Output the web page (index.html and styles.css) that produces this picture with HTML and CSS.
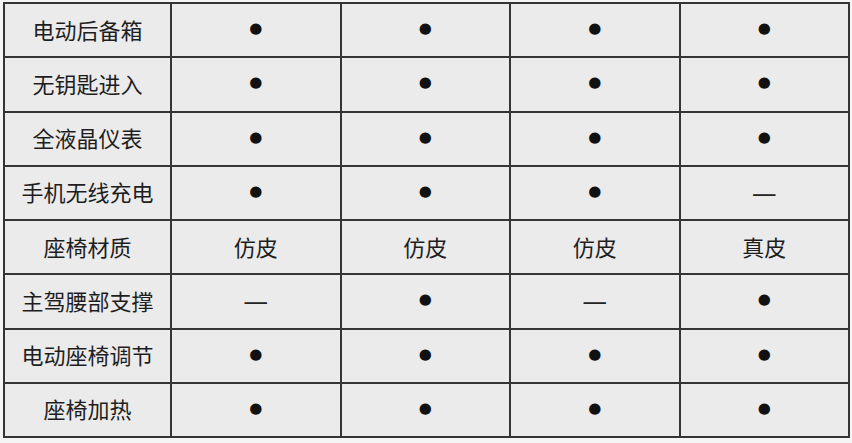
FILE: index.html
```html
<!DOCTYPE html>
<html lang="zh">
<head>
<meta charset="utf-8">
<link rel="stylesheet" href="styles.css">
</head>
<body>
<table class="spec">
  <tbody>
    <tr><th>电动后备箱</th><td>●</td><td>●</td><td>●</td><td>●</td></tr>
    <tr><th>无钥匙进入</th><td>●</td><td>●</td><td>●</td><td>●</td></tr>
    <tr><th>全液晶仪表</th><td>●</td><td>●</td><td>●</td><td>●</td></tr>
    <tr><th>手机无线充电</th><td>●</td><td>●</td><td>●</td><td><span class="dash">—</span></td></tr>
    <tr><th>座椅材质</th><td class="txt">仿皮</td><td class="txt">仿皮</td><td class="txt">仿皮</td><td class="txt">真皮</td></tr>
    <tr><th>主驾腰部支撑</th><td><span class="dash">—</span></td><td>●</td><td><span class="dash">—</span></td><td>●</td></tr>
    <tr><th>电动座椅调节</th><td>●</td><td>●</td><td>●</td><td>●</td></tr>
    <tr><th>座椅加热</th><td>●</td><td>●</td><td>●</td><td>●</td></tr>
  </tbody>
</table>
</body>
</html>
```
FILE: styles.css
```css
html, body {
  margin: 0;
  padding: 0;
  background: #f5f5f5;
}
body {
  padding: 2px 0 0 3px;
  font-family: "Noto Sans CJK SC", "Noto Sans", sans-serif;
  color: #1e1e1e;
}
.spec {
  border-collapse: collapse;
  width: 847px;
  background: #ebebeb;
  table-layout: fixed;
}
.spec th, .spec td {
  border: 2px solid #353535;
  height: 49.25px;
  padding: 0 0 3px 0;
  text-align: center;
  vertical-align: middle;
  font-size: 22px;
  font-weight: 400;
  line-height: 1;
}
.spec th {
  width: 165px;
}
.spec td {
  font-family: "DejaVu Sans", sans-serif;
  font-size: 15px;
  color: #111;
}
.spec td.txt {
  font-family: "Noto Sans CJK SC", sans-serif;
  font-size: 22px;
  color: #1e1e1e;
}
.dash {
  font-family: "Noto Sans CJK SC", sans-serif;
  font-size: 28px;
  color: #222;
}
```
